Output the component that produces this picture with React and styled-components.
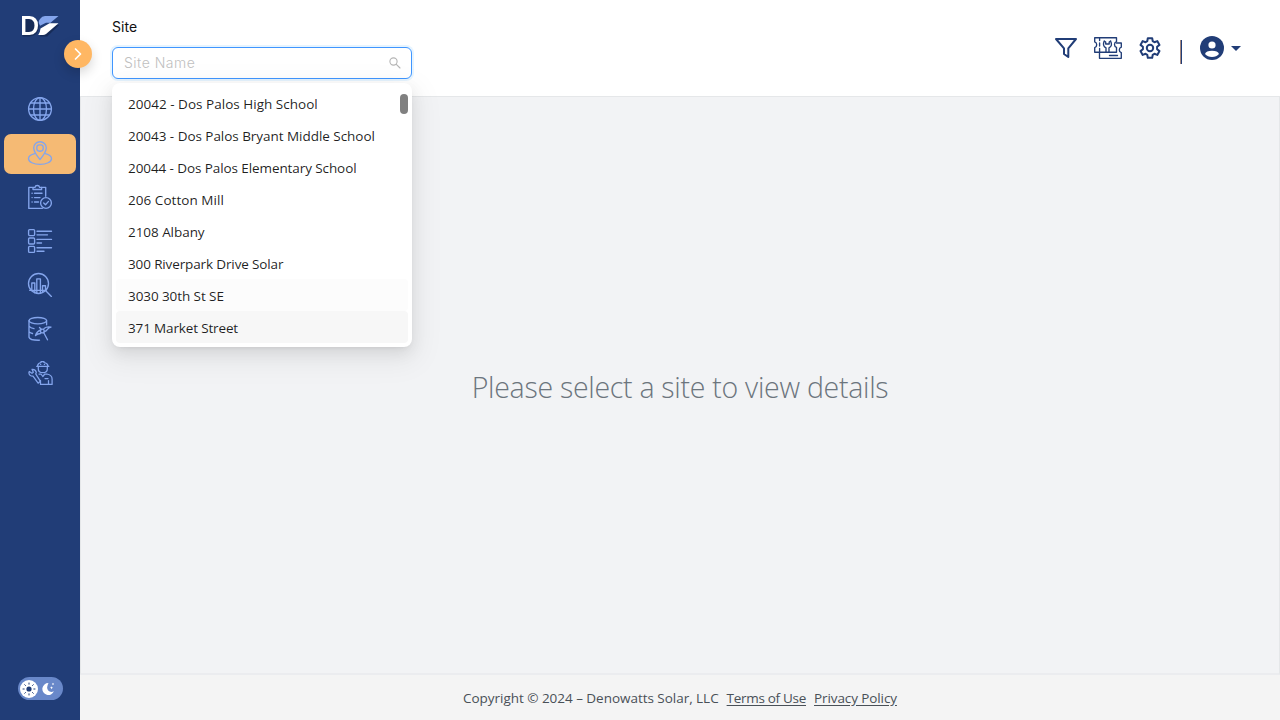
import React from "react";
import styled, { createGlobalStyle, css } from "styled-components";

const navy = "#213d77";
const periwinkle = "#84a5ec";

const GlobalStyle = createGlobalStyle`
  *, *::before, *::after { box-sizing: border-box; }
  body {
    margin: 0;
    overflow: hidden;
    font-family: "Open Sans", "Noto Sans", sans-serif;
    font-size: 14px;
    color: #212529;
  }
`;

const Page = styled.div`
  display: flex;
  width: 1280px;
  height: 720px;
`;

const Sidebar = styled.aside`
  position: relative;
  z-index: 2;
  display: flex;
  flex-direction: column;
  align-items: center;
  flex: 0 0 80px;
  padding: 14px 4px 20px;
  background: ${navy};
`;

const LogoArea = styled.div`
  height: 75.6px;
  flex: none;
`;

const Nav = styled.nav`
  display: flex;
  flex-direction: column;
  gap: 4px;
  width: 100%;
`;

const NavItem = styled.a`
  display: flex;
  align-items: center;
  justify-content: center;
  height: 40px;
  padding-bottom: 1px;
  border-radius: 7px;
  background: ${(p) => (p.$active ? "#f5ba74" : "transparent")};
`;

const LineIcon = styled.svg`
  display: block;
  overflow: visible;
  fill: none;
  stroke: ${(p) => p.$color || periwinkle};
  stroke-width: ${(p) => p.$weight || 1.35};
  stroke-linecap: round;
  stroke-linejoin: round;
`;

const ExpandButton = styled.button`
  position: absolute;
  left: 64px;
  top: 40px;
  display: flex;
  align-items: center;
  justify-content: center;
  width: 28px;
  height: 28px;
  padding: 0;
  border: 0;
  border-radius: 50%;
  background: #ffb763;
  box-shadow: 0 5px 12px rgba(0, 0, 0, 0.16);
`;

const ThemeToggle = styled.div`
  display: flex;
  align-items: center;
  gap: 3px;
  width: 45px;
  height: 23px;
  margin-top: auto;
  padding: 0 2px;
  border-radius: 12px;
  background: #6988c9;
`;

const Knob = styled.span`
  display: flex;
  align-items: center;
  justify-content: center;
  width: 18px;
  height: 18px;
  border-radius: 50%;
  background: #fff;
`;

const Main = styled.main`
  display: flex;
  flex-direction: column;
  flex: 1;
  min-width: 0;
`;

const Header = styled.header`
  display: flex;
  justify-content: space-between;
  flex: 0 0 96px;
  padding: 17px 39px 0 32px;
  background: #fff;
`;

const Field = styled.div`
  position: relative;
  width: 300px;
`;

const Label = styled.label`
  display: block;
  height: 30px;
  font: 400 14px/20px Inter, sans-serif;
  letter-spacing: 0.1px;
  color: #111;
`;

const SearchBox = styled.div`
  display: flex;
  align-items: center;
  justify-content: space-between;
  height: 32px;
  padding: 0 10px 0 11px;
  border: 1px solid #4096ff;
  border-radius: 6px;
  background: #fff;
  box-shadow: 0 0 0 2px rgba(5, 145, 255, 0.1);
`;

const Placeholder = styled.span`
  font: 300 14px/20px Inter, sans-serif;
  letter-spacing: 0.5px;
  color: #bfbfbf;
`;

const Dropdown = styled.ul`
  position: absolute;
  z-index: 3;
  left: 0;
  top: 66px;
  width: 300px;
  margin: 0;
  padding: 4px;
  list-style: none;
  border-radius: 8px;
  background: #fff;
  box-shadow: 0 6px 16px rgba(0, 0, 0, 0.08), 0 3px 6px -4px rgba(0, 0, 0, 0.12),
    0 9px 28px 8px rgba(0, 0, 0, 0.05);
`;

const Option = styled.li`
  height: 32px;
  padding: 0 12px;
  border-radius: 4px;
  font-size: 13.5px;
  line-height: 35px;
  letter-spacing: ${(p) => p.$track}px;
  white-space: nowrap;
  color: rgba(0, 0, 0, 0.88);
  background: ${(p) => p.$shade || "transparent"};
`;

const ScrollThumb = styled.span`
  position: absolute;
  right: 4px;
  top: 11px;
  width: 8px;
  height: 20px;
  border-radius: 4px;
  background: #808080;
`;

const Tools = styled.div`
  display: flex;
  align-items: center;
  height: 62px;
`;

const Tool = styled.span`
  display: flex;
  margin-left: ${(p) => p.$gap || 0}px;
`;

const Divider = styled.span`
  width: 2px;
  height: 24px;
  margin: 7px 0 0 19px;
  background: linear-gradient(90deg, #a58880 0 1px, ${navy} 1px 2px);
`;

const Content = styled.section`
  display: flex;
  align-items: center;
  justify-content: center;
  flex: 1;
  padding-top: 4px;
  border: 1px solid #e5e7e9;
  border-bottom: 2px solid #ebecef;
  background: #f2f3f5;
`;

const Message = styled.h1`
  margin: 0;
  font-size: 28.5px;
  font-weight: 300;
  line-height: 40px;
  letter-spacing: -0.28px;
  white-space: nowrap;
  color: #6c757d;
`;

const footerText = css`
  font-size: 13.5px;
  line-height: 20px;
  letter-spacing: -0.03px;
  color: #495057;
`;

const Footer = styled.footer`
  display: flex;
  align-items: center;
  justify-content: center;
  gap: 8px;
  flex: 0 0 45px;
  background: #f4f4f4;
  white-space: nowrap;
  ${footerText}
`;

const FooterLink = styled.a`
  letter-spacing: ${(p) => p.$track}px;
  text-decoration: underline;
  text-underline-offset: 2px;
`;

const Logo = () => (
  <svg width="38" height="24" viewBox="21 14 38 24">
    <g transform="translate(.7 1.5)" fill="#172c58">
      <path d="M22 16h7q9 1 9 9.500t-9 9.500h-7z" />
      <path d="M39 35l7-11.500h12.500L46.500 35z" />
    </g>
    <path fill={periwinkle} d="M38.800 23q-.3-2.500 1.200-4 2-2.800 5-3h13.500l-8 6.700H46l-6 3z" />
    <path fill="#fff" fillRule="evenodd" d="M22 16h7.500q8.500.5 8.500 9.500T29.500 35H22zM25.400 19v13h3.600q5.500-.5 5.500-6.500T29 19z" />
    <path fill="#fff" d="M38.200 35q2-2.500 2.300-6.500l9-5.200h9L46 34q-1.500 1-3 1z" />
  </svg>
);

const Globe = () => (
  <LineIcon width="24" height="24" viewBox="0 0 24 24">
    <circle cx="12" cy="12" r="11.400" />
    <ellipse cx="12" cy="12" rx="6.500" ry="11.400" />
    <path d="M12 .6v22.800M.6 12h22.800M2.700 6h18.600M2.700 18h18.600" />
  </LineIcon>
);

const SitePin = () => (
  <LineIcon width="24" height="24" viewBox="0 0 24 24">
    <path d="M12 18.500Q6 11.500 5.700 7a6.300 6.300 0 0 1 12.600 0Q18 11.500 12 18.500z" />
    <rect x="8.800" y="3.800" width="6.400" height="6.400" rx="2.600" />
    <path d="M6.800 12.700C2.500 13.800.5 15.700.5 17.700c0 3.300 5.100 5.600 11.500 5.600s11.500-2.300 11.500-5.600c0-2-2-3.900-6.300-5" />
  </LineIcon>
);

const Clipboard = () => (
  <LineIcon width="24" height="24" viewBox="0 0 24 24">
    <path d="M4.500 2.300H.8v21.100h13.500M13.500 2.300h4.200v9" />
    <path d="M5 4.500V2.300h2q.3-1.800 2.300-1.800t2.300 1.800h2v2.200z" />
    <path d="M4 8.200h.2M6.500 8.200h7.500M4 12.600h.2M6.500 12.600h5.500M4 17h.2M6.500 17h4" />
    <circle cx="18" cy="18" r="5.400" />
    <path d="m15.700 18 1.800 1.700 3-3.300" />
  </LineIcon>
);

const ListIcon = () => (
  <LineIcon width="24" height="24" viewBox="0 0 24 24">
    <rect x=".6" y=".6" width="6" height="6" rx="1" />
    <rect x=".6" y="9" width="6" height="6" rx="1" />
    <rect x=".6" y="17.400" width="6" height="6" rx="1" />
    <path d="M9 2.200h14.500M9 5.800h10.500M9 10.400h14.500M9 14h4.500M9 18.700h14.500M9 22.200h7" />
  </LineIcon>
);

const Analytics = () => (
  <LineIcon width="24" height="24" viewBox="0 0 24 24">
    <circle cx="10.500" cy="10.500" r="10" />
    <path d="M3.800 17.500V10h3v9.700M8.800 20.200V5.800h3.600v14.400M14.500 19v-6.300h3V17M17.500 17.500l5.900 5.900M1.700 17.300h16.500" />
  </LineIcon>
);

const DataMining = () => (
  <LineIcon width="24" height="24" viewBox="0 0 24 24">
    <ellipse cx="9.800" cy="3.700" rx="8.800" ry="3.200" />
    <path d="M1 3.700v16.500C1.500 22 5 23.300 11.500 23.200M18.600 3.700v4M1 9.200q1.500 2 5 2.400M1 14.500q1 1.500 3.500 2" />
    <path d="M7.500 18.500q1.500-4.200 5-5.500M16 11.500q3-2.300 7-1.300-2.500.6-3.800 2.500-1 1.500-2.700 2M12.500 16.500q-2.500 0-5 2M11.500 10.500l2 2M15.500 15.500l1 1.500M16.700 17.500l2.800 5.300" />
    <circle cx="14.300" cy="14" r="1.900" />
  </LineIcon>
);

const Engineer = () => (
  <LineIcon $weight={1.25} width="25" height="24" viewBox="0 0 25 24">
    <path d="M9.500 4.800Q10 2 13 1.500V.6h3v.9q3.500.5 4 3.300M8.700 5.300h12.200M12.500 3.300h.3M16.300 3.300h.3" />
    <path d="M10.300 6v2q0 3.700 4.500 3.700T19.300 8V6" />
    <path d="M11 13h2l1.800 2.500 2-2.500h2q5.300 1 5.300 5v5.400H12.500v-4M20.500 23v-3.500M17 17.500h3" />
    <path d="M4 8.300q3.700-.3 4.300 3-.2 1-.6 1.600l4.600 7.300-2.200 2L5 15.200Q1.500 15.300.9 12l.4-1.500L4 12.300l1.300-1z" />
  </LineIcon>
);

const Filter = () => (
  <LineIcon $color={navy} $weight={2} width="22" height="20" viewBox="0 0 22 20">
    <path d="M1 1h20l-7.700 9.300v8.700l-4.300-3v-5.700z" />
  </LineIcon>
);

const Ticket = () => (
  <LineIcon $color={navy} $weight={1.35} width="28" height="22" viewBox="0 0 28 22">
    <path d="M.7.700h21.800v4q-2 .5-2 2.800t2 2.800v4.900H.7v-4.500q2-.5 2-2.900T.7 4.900z" />
    <path d="M22.500 6h4.800v4.200q-2 .5-2 2.700t2 2.700v5.700H5.500v-6" />
    <path d="M5.600 1.500v2M5.600 6v3M5.600 11.500v3M15.500 18.500h8" />
    <path d="M10.200 4Q8 9 12 10.800v4.400M16.600 4Q19 9 15 10.800v4.400M10.200 4l1.500 1v2h3.500V5l1.400-1" />
  </LineIcon>
);

const Gear = () => (
  <LineIcon $color={navy} $weight={2} width="22" height="22" viewBox="0 0 22 22">
    <circle cx="11" cy="11" r="3.200" />
    <path d="M8.800 1.200h4.400l.5 3 1.700 1 2.900-1.100 2.200 3.800-2.400 1.900v2.400l2.400 1.900-2.200 3.800-2.900-1.100-1.700 1-.5 3H8.800l-.5-3-1.700-1-2.900 1.100-2.200-3.800 2.400-1.900V9.800L1.500 7.900l2.200-3.800 2.900 1.100 1.700-1z" />
  </LineIcon>
);

const Avatar = () => (
  <svg width="24" height="24" viewBox="0 0 24 24">
    <circle cx="12" cy="12" r="12" fill={navy} />
    <circle cx="12" cy="9" r="3.600" fill="#fff" />
    <path d="M5 18Q6.200 14.800 12 14.800T19 18q-2.500 3-7 3t-7-3z" fill="#fff" />
  </svg>
);

const Sun = () => (
  <svg width="14" height="14" viewBox="0 0 14 14">
    <circle cx="7" cy="7" r="2.600" fill={navy} />
    <path
      d="M7 1v1.200M7 11.800V13M1 7h1.200M11.800 7H13M2.700 2.700l.8.800M10.500 10.500l.8.800M11.300 2.700l-.8.800M3.500 10.500l-.8.800"
      stroke={navy}
      strokeLinecap="round"
    />
  </svg>
);

const Moon = () => (
  <svg width="14" height="14" viewBox="0 0 14 14" fill="#fff">
    <path d="M7.500 1A6 6 0 1 0 12.900 9.300Q9.500 11 7.200 8.500T7.500 1z" />
    <path d="m9 4.700 1 .5.500-1 .5 1 1 .5-1 .5-.5 1-.5-1zM12 .8l.4.8.8.4-.8.400-.4.800-.4-.8-.8-.4.800-.4z" />
  </svg>
);

const navIcons = [Globe, SitePin, Clipboard, ListIcon, Analytics, DataMining, Engineer];

const sites = [
  { name: "20042 - Dos Palos High School", track: 0.02 },
  { name: "20043 - Dos Palos Bryant Middle School", track: -0.04 },
  { name: "20044 - Dos Palos Elementary School", track: -0.09 },
  { name: "206 Cotton Mill", track: 0.05 },
  { name: "2108 Albany", track: -0.05 },
  { name: "300 Riverpark Drive Solar", track: -0.13 },
  { name: "3030 30th St SE", track: -0.08, shade: "#fcfcfc" },
  { name: "371 Market Street", track: -0.15, shade: "#f7f7f7" },
];

export default function App() {
  return (
    <Page>
      <GlobalStyle />
      <Sidebar>
        <LogoArea>
          <Logo />
        </LogoArea>
        <Nav>
          {navIcons.map((Icon, i) => (
            <NavItem key={i} $active={i === 1}>
              <Icon />
            </NavItem>
          ))}
        </Nav>
        <ThemeToggle>
          <Knob>
            <Sun />
          </Knob>
          <Moon />
        </ThemeToggle>
        <ExpandButton aria-label="Expand menu">
          <LineIcon $color="#fff" $weight={1.7} width="8" height="12" viewBox="0 0 8 12">
            <path d="m1.500 1 5 5-5 5" />
          </LineIcon>
        </ExpandButton>
      </Sidebar>
      <Main>
        <Header>
          <Field>
            <Label>Site</Label>
            <SearchBox>
              <Placeholder>Site Name</Placeholder>
              <LineIcon $color="#b5b5b5" $weight={1.1} width="12" height="12" viewBox="0 0 12 12">
                <circle cx="4.500" cy="4.500" r="3.600" />
                <path d="m7.300 7.300 3.700 3.700" />
              </LineIcon>
            </SearchBox>
            <Dropdown>
              {sites.map((s) => (
                <Option key={s.name} $track={s.track} $shade={s.shade}>
                  {s.name}
                </Option>
              ))}
              <ScrollThumb />
            </Dropdown>
          </Field>
          <Tools>
            <Tool><Filter /></Tool>
            <Tool $gap={17}><Ticket /></Tool>
            <Tool $gap={17}><Gear /></Tool>
            <Divider />
            <Tool $gap={18}><Avatar /></Tool>
            <Tool $gap={7}>
              <svg width="10" height="5" viewBox="0 0 10 5">
                <path d="M0 0h10L5 5z" fill={navy} />
              </svg>
            </Tool>
          </Tools>
        </Header>
        <Content>
          <Message>Please select a site to view details</Message>
        </Content>
        <Footer>
          <span>Copyright © 2024 – Denowatts Solar, LLC</span>
          <FooterLink $track={-0.3}>Terms of Use</FooterLink>
          <FooterLink $track={-0.1}>Privacy Policy</FooterLink>
        </Footer>
      </Main>
    </Page>
  );
}
